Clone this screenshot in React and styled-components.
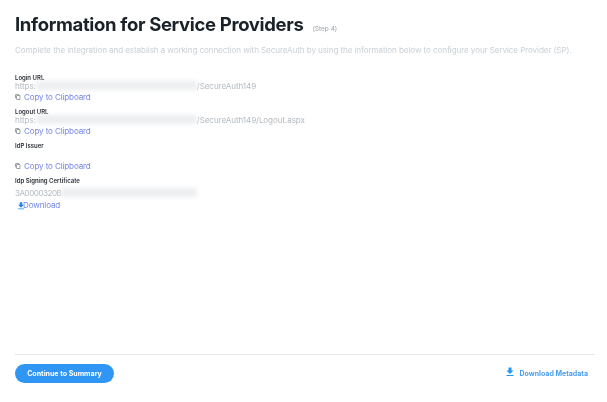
import React from "react";
import styled, { createGlobalStyle } from "styled-components";
import { MdContentCopy, MdFileDownload } from "react-icons/md";

const GlobalStyle = createGlobalStyle`
  html, body {
    margin: 0;
    padding: 0;
    background: #fff;
  }
  body {
    font-family: "Inter", "Open Sans", "Liberation Sans", sans-serif;
  }
`;

const Page = styled.div`
  width: 607px;
  height: 402px;
  box-sizing: border-box;
  padding: 12px 12px 0 15px;
  display: flex;
  flex-direction: column;
  overflow: hidden;
  filter: blur(0.3px);
`;

const Header = styled.div`
  display: flex;
  align-items: baseline;
  gap: 9px;
  height: 26px;
`;

const Title = styled.h1`
  margin: 0;
  font-size: 18.5px;
  line-height: 24px;
  font-weight: 700;
  letter-spacing: -0.34px;
  color: #1a2128;
`;

const Step = styled.span`
  font-size: 6.5px;
  color: #98a2aa;
`;

const Intro = styled.p`
  margin: 5px 0 16.5px;
  font-size: 8.1px;
  line-height: 14px;
  letter-spacing: -0.1px;
  color: #c9d0d5;
  white-space: nowrap;
`;

const Fields = styled.div`
  display: flex;
  flex-direction: column;
  flex: 1;
`;

const Field = styled.div`
  display: flex;
  flex-direction: column;
  margin-bottom: ${({ $gap }) => $gap}px;
`;

const Label = styled.div`
  font-size: 6px;
  line-height: 7.5px;
  font-weight: 600;
  color: #2b2f36;
`;

const Value = styled.div`
  min-height: ${({ $tall }) => ($tall ? 11 : 10)}px;
  margin-top: ${({ $offset }) => $offset || 0}px;
  font-size: 8.1px;
  line-height: 10px;
  letter-spacing: ${({ $tight }) => ($tight ? "-0.5px" : "-0.1px")};
  color: #b4bbc0;
  white-space: nowrap;
`;

const Redacted = styled.span`
  display: inline-block;
  width: ${({ $width }) => $width}px;
  height: 9px;
  vertical-align: -1px;
  background: #eceef0;
  filter: blur(2px);
`;

const ActionLink = styled.a`
  display: flex;
  align-items: center;
  height: 12px;
  font-size: 8.1px;
  letter-spacing: -0.15px;
  color: #7586e4;
  text-decoration: none;
`;

const DownloadLink = styled(ActionLink)`
  height: 14px;
`;

const CopyIcon = styled(MdContentCopy)`
  width: 6px;
  height: 6px;
  margin-right: 3px;
  color: #3f454b;
`;

const DownloadIcon = styled(MdFileDownload)`
  width: 10px;
  height: 10px;
  margin: 3px -3px 0 1px;
  color: #1e88e5;
`;

const Footer = styled.div`
  height: 48px;
  box-sizing: border-box;
  border-top: 1px solid #e4e6e8;
  display: flex;
  justify-content: space-between;
  align-items: flex-start;
  padding-top: 9px;
`;

const PrimaryButton = styled.button`
  width: 99px;
  height: 19px;
  padding: 0;
  border: 0;
  border-radius: 10px;
  background: #2f96f5;
  color: #fff;
  font-family: inherit;
  font-size: 7.05px;
  font-weight: 700;
`;

const MetadataLink = styled.a`
  display: flex;
  align-items: center;
  gap: 4px;
  margin: 5px 7px 0 0;
  font-size: 7px;
  font-weight: 700;
  color: #4a9df0;
  text-decoration: none;
`;

const MetadataIcon = styled(MdFileDownload)`
  width: 12px;
  height: 12px;
  margin-top: -4px;
  color: #2196f3;
`;

function CopyLink() {
  return (
    <ActionLink href="#">
      <CopyIcon />
      Copy to Clipboard
    </ActionLink>
  );
}

export default function App() {
  return (
    <>
      <GlobalStyle />
      <Page>
        <Header>
          <Title>Information for Service Providers</Title>
          <Step>(Step 4)</Step>
        </Header>
        <Intro>
          Complete the integration and establish a working connection with
          SecureAuth by using the information below to configure your Service
          Provider (SP).
        </Intro>
        <Fields>
          <Field $gap={4.5}>
            <Label>Login URL</Label>
            <Value>
              https:
              <Redacted $width={161} />
              /SecureAuth149
            </Value>
            <CopyLink />
          </Field>
          <Field $gap={4.5}>
            <Label>Logout URL</Label>
            <Value>
              https:
              <Redacted $width={161} />
              /SecureAuth149/Logout.aspx
            </Value>
            <CopyLink />
          </Field>
          <Field $gap={4.5}>
            <Label>IdP Issuer</Label>
            <Value $tall />
            <CopyLink />
          </Field>
          <Field $gap={0}>
            <Label>Idp Signing Certificate</Label>
            <Value $offset={3.5} $tight>
              3A0000320B
              <Redacted $width={136} />
            </Value>
            <DownloadLink href="#">
              <DownloadIcon />
              Download
            </DownloadLink>
          </Field>
        </Fields>
        <Footer>
          <PrimaryButton>Continue to Summary</PrimaryButton>
          <MetadataLink href="#">
            <MetadataIcon />
            Download Metadata
          </MetadataLink>
        </Footer>
      </Page>
    </>
  );
}
